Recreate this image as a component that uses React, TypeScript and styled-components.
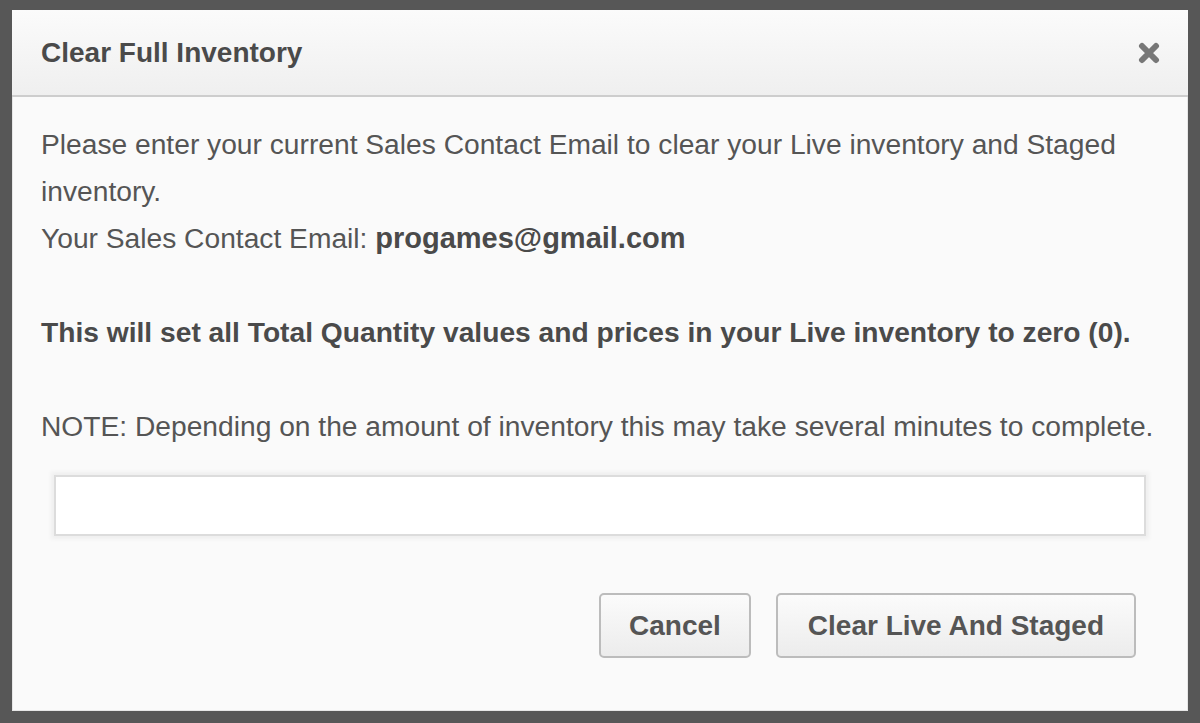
import React from "react";
import styled, { createGlobalStyle } from "styled-components";

const Global = createGlobalStyle`
  html, body { margin: 0; padding: 0; }
  body {
    background: #575757;
    font-family: "Liberation Sans", Arial, sans-serif;
  }
`;

const Backdrop = styled.div`
  width: 1200px;
  height: 723px;
  box-sizing: border-box;
  padding: 10px 12px 12px 12px;
  background: #575757;
`;

const Dialog = styled.div`
  height: 100%;
  display: flex;
  flex-direction: column;
  background: #fafafa;
  box-shadow: 0 0 0 1px #e6e6e6 inset;
`;

const Header = styled.div`
  height: 85px;
  display: flex;
  align-items: center;
  justify-content: space-between;
  padding: 0 27px 0 29px;
  background: linear-gradient(#fbfbfb, #efefef);
  border-bottom: 2px solid #cdcdcd;
`;

const Title = styled.h1`
  margin: 0;
  font-size: 28px;
  font-weight: bold;
  color: #4a4a4a;
`;

const CloseButton = styled.button`
  border: none;
  background: none;
  padding: 0;
  width: 24px;
  height: 24px;
  display: flex;
  align-items: center;
  justify-content: center;
  cursor: pointer;
`;

const Body = styled.div`
  flex: 1;
  padding: 24px 29px 0 29px;
  font-size: 28.2px;
  line-height: 47px;
  color: #555;
`;

const Para = styled.p<{ $last?: boolean }>`
  margin: 0 0 ${(p) => (p.$last ? 0 : 47)}px 0;
`;

const Strong = styled.strong`
  color: #4a4a4a;
`;

const Email = styled.strong`
  color: #4a4a4a;
  font-size: 29px;
`;

const InputWrap = styled.div`
  margin: 25px 13px 0 13px;
`;

const EmailInput = styled.input`
  display: block;
  width: 100%;
  box-sizing: border-box;
  height: 61px;
  border: 2px solid #dcdcdc;
  background: #fff;
  box-shadow: 0 0 4px 3px #efefef;
  font-size: 24px;
  font-family: inherit;
  outline: none;
`;

const Actions = styled.div`
  display: flex;
  justify-content: flex-end;
  gap: 25px;
  padding: 57px 23px 0 0;
`;

const Button = styled.button<{ $pad: number }>`
  height: 65px;
  padding: 0 ${(p) => p.$pad}px;
  border: 2px solid #bcbcbc;
  border-radius: 5px;
  background: linear-gradient(#fbfbfb, #ececec);
  font-family: "Liberation Sans", Arial, sans-serif;
  font-size: 28px;
  font-weight: bold;
  color: #555;
  cursor: pointer;
`;

export default function App() {
  return (
    <>
      <Global />
      <Backdrop>
        <Dialog>
          <Header>
            <Title>Clear Full Inventory</Title>
            <CloseButton aria-label="Close">
              <svg width="22" height="22" viewBox="0 0 22 22">
                <path
                  d="M4 4 L18 18 M18 4 L4 18"
                  stroke="#777"
                  strokeWidth="6"
                  strokeLinecap="round"
                />
              </svg>
            </CloseButton>
          </Header>
          <Body>
            <Para>
              Please enter your current Sales Contact Email to clear your Live inventory and Staged inventory.
              <br />
              Your Sales Contact Email: <Email>progames@gmail.com</Email>
            </Para>
            <Para>
              <Strong>This will set all Total Quantity values and prices in your Live inventory to zero (0).</Strong>
            </Para>
            <Para $last>
              NOTE: Depending on the amount of inventory this may take several minutes to complete.
            </Para>
            <InputWrap>
              <EmailInput type="text" />
            </InputWrap>
            <Actions>
              <Button $pad={28}>Cancel</Button>
              <Button $pad={30}>Clear Live And Staged</Button>
            </Actions>
          </Body>
        </Dialog>
      </Backdrop>
    </>
  );
}
